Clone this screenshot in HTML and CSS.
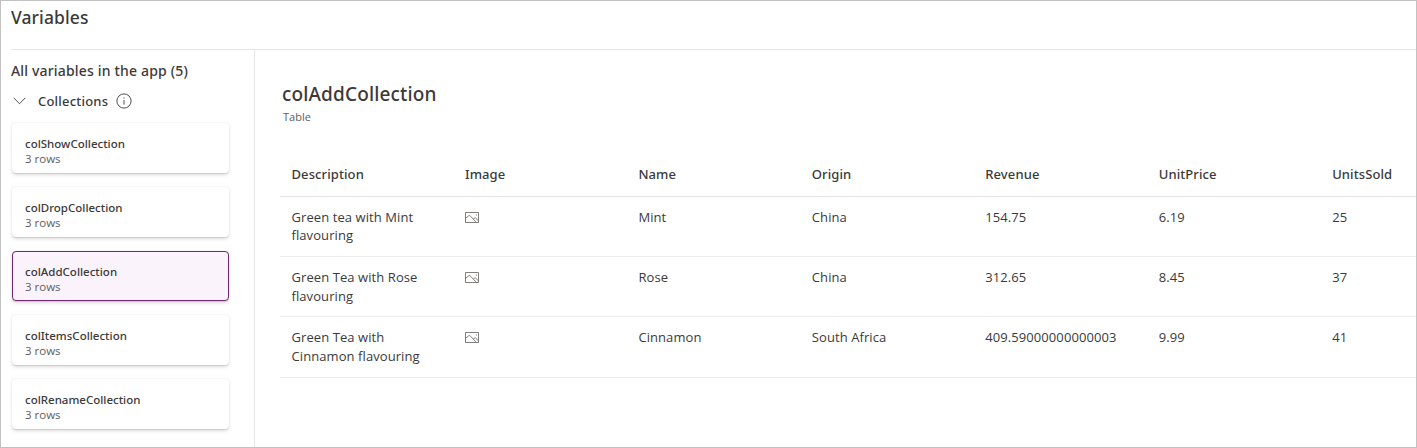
FILE: index.html
```html
<!DOCTYPE html>
<html lang="en">
<head>
<meta charset="utf-8">
<title>Variables</title>
<link rel="stylesheet" href="styles.css">
</head>
<body>
<svg class="defs" width="0" height="0"><symbol id="picture" viewBox="0 0 14 11"><path d="M.5.5h13v10H.5zM.7 6.2 4.5 3.2l7 7.2M8.2 7.2l1.9-1.6 3.3 3.2M11 3h1" fill="none" stroke="currentColor" stroke-width=".8"/></symbol></svg>
<div class="window">
  <header class="header"><h1 class="title">Variables</h1></header>
  <div class="body">
    <aside class="sidebar">
      <h2 class="summary">All variables in the app (5)</h2>
      <div class="group">
        <svg class="chevron" viewBox="0 0 13 8"><path d="M.7.9 6.5 6.7 12.3.9" fill="none" stroke="currentColor" stroke-width=".9"/></svg>
        <span class="group-name">Collections</span>
        <svg class="info" viewBox="0 0 16 16"><circle cx="8" cy="8" r="7.1" fill="none" stroke="currentColor" stroke-width=".9"/><path d="M8 7v4.6M8 4.4v1.2" stroke="currentColor" stroke-width=".9"/></svg>
      </div>
      <ul class="cards">
        <li class="card"><span class="card-name">colShowCollection</span><span class="card-rows">3 rows</span></li>
        <li class="card"><span class="card-name">colDropCollection</span><span class="card-rows">3 rows</span></li>
        <li class="card selected"><span class="card-name">colAddCollection</span><span class="card-rows">3 rows</span></li>
        <li class="card"><span class="card-name">colItemsCollection</span><span class="card-rows">3 rows</span></li>
        <li class="card"><span class="card-name">colRenameCollection</span><span class="card-rows">3 rows</span></li>
      </ul>
    </aside>
    <main class="detail">
      <h2 class="detail-title">colAddCollection</h2>
      <p class="detail-type">Table</p>
      <div class="table">
        <div class="row head"><span>Description</span><span>Image</span><span>Name</span><span>Origin</span><span>Revenue</span><span>UnitPrice</span><span>UnitsSold</span></div>
        <div class="row first"><span>Green tea with Mint<br>flavouring</span><span><svg class="picture"><use href="#picture"/></svg></span><span>Mint</span><span>China</span><span>154.75</span><span>6.19</span><span>25</span></div>
        <div class="row"><span>Green Tea with Rose<br>flavouring</span><span><svg class="picture"><use href="#picture"/></svg></span><span>Rose</span><span>China</span><span>312.65</span><span>8.45</span><span>37</span></div>
        <div class="row last"><span>Green Tea with<br>Cinnamon flavouring</span><span><svg class="picture"><use href="#picture"/></svg></span><span>Cinnamon</span><span>South Africa</span><span>409.59000000000003</span><span>9.99</span><span>41</span></div>
      </div>
    </main>
  </div>
</div>
</body>
</html>
```
FILE: styles.css
```css
* { box-sizing: border-box; }
body { margin: 0; background: #fff; color: #3b3a39; font-family: "Open Sans", "Noto Sans", sans-serif; }
h1, h2, p, ul { margin: 0; padding: 0; list-style: none; }
.defs { display: none; }
.window { height: 448px; border: 1px solid #c2c2c2; display: flex; flex-direction: column; overflow: hidden; }
.header { height: 49px; margin-left: 10px; border-bottom: 1px solid #e6e6e6; flex: none; }
.title, .summary, .group-name, .card-name, .detail-title, .row.head { font-family: "Noto Sans", "Open Sans", sans-serif; font-weight: 500; }
.title { font-size: 17.5px; line-height: 24px; padding-top: 4px; letter-spacing: .1px; }
.body { display: flex; flex: 1; min-height: 0; }
.sidebar { width: 254px; flex: none; border-right: 1px solid #e6e6e6; padding: 11px 0 0 10px; }
.summary { font-size: 14px; line-height: 20px; letter-spacing: .17px; white-space: nowrap; }
.group { display: flex; align-items: center; height: 20px; margin-top: 10px; }
.chevron { width: 13px; height: 8px; margin: 0 12px 0 2px; }
.group-name { width: 78px; font-size: 13px; letter-spacing: .2px; white-space: nowrap; }
.info { width: 16px; height: 16px; }
.cards { display: flex; flex-direction: column; gap: 14px; margin: 12px 0 0 1px; }
.card { width: 217px; height: 50px; border: 1px solid transparent; border-radius: 4px; padding: 12px 0 0 12px; display: flex; flex-direction: column; box-shadow: 0 1.6px 3.6px rgba(0,0,0,.132), 0 .3px .9px rgba(0,0,0,.108); }
.card.selected { border-color: #742774; background: #faf3fc; }
.card-name { font-size: 11.5px; line-height: 16px; }
.card-rows { font-size: 11.5px; line-height: 14px; color: #605e5c; }
.detail { flex: 1; min-width: 0; padding: 31px 0 0 25px; }
.detail-title { font-size: 19px; line-height: 26px; padding-left: 2px; letter-spacing: .15px; }
.detail-type { font-size: 11px; line-height: 16px; padding: 2px 0 0 3px; color: #605e5c; }
.table { margin-top: 27px; }
.row { display: grid; grid-template-columns: repeat(7, 173.45px); height: 60px; width: 1214px; padding: 11px 0 0 11.5px; border-bottom: 1px solid #ededed; font-size: 13px; line-height: 18.5px; letter-spacing: .08px; white-space: nowrap; }
.row.head { height: 45px; padding-top: 13px; border-color: #e6e6e6; letter-spacing: .1px; }
.row.first { line-height: 18px; }
.row.last { height: 61px; }
.picture { display: block; width: 14px; height: 11px; margin-top: 4px; color: #605e5c; }
```
